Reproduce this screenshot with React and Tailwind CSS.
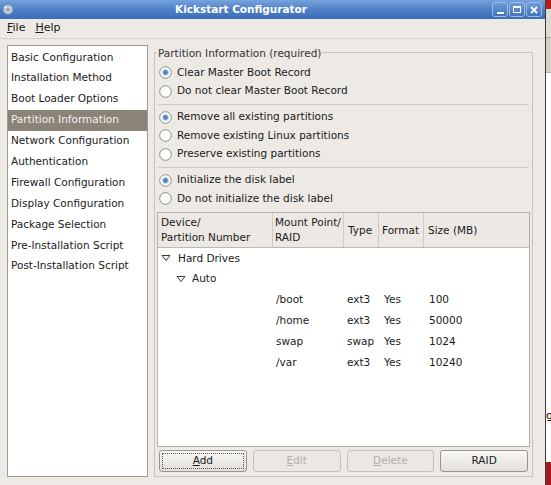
import React from "react";

const F = { fontFamily: '"DejaVu Sans", "Liberation Sans", sans-serif' };

function Radio({ checked }) {
  return (
    <svg width="13" height="13" viewBox="0 0 13 13" className="shrink-0">
      <circle cx="6.5" cy="6.5" r="5.8" fill="#ffffff" stroke="#8f8b85" strokeWidth="1" />
      {checked && (
        <>
          <circle cx="6.5" cy="6.5" r="3.6" fill="#c9dbf2" />
          <circle cx="6.5" cy="6.5" r="2.4" fill="#4f84c9" />
        </>
      )}
    </svg>
  );
}

function RadioRow({ checked, label }) {
  return (
    <div className="h-[18.5px] flex items-center gap-[5px] pl-[1px]">
      <Radio checked={checked} />
      <span>{label}</span>
    </div>
  );
}

function Sep() {
  return (
    <div className="h-[7.5px] flex items-center">
      <div className="w-full h-0 border-t border-[#cfcac3]" />
    </div>
  );
}

function Tri() {
  return (
    <svg width="10" height="8" viewBox="0 0 10 8" className="shrink-0">
      <polygon points="1,1.5 9,1.5 5,6.5" fill="none" stroke="#3c3c3c" strokeWidth="1" />
    </svg>
  );
}

function Btn({ children, disabled, focus }) {
  return (
    <div
      className={
        "h-[22px] rounded-[3px] border flex items-center justify-center p-[2px] " +
        (disabled
          ? "border-[#c4c0ba] bg-[#ebe8e4] text-[#b3afa9]"
          : "border-[#9a968f] bg-gradient-to-b from-[#f8f7f5] to-[#e4e0da] text-[#1a1a1a]")
      }
    >
      <div
        className={
          "w-full h-full flex items-center justify-center " +
          (focus ? "border border-dotted border-[#555]" : "")
        }
      >
        {children}
      </div>
    </div>
  );
}

const sideItems = [
  "Basic Configuration",
  "Installation Method",
  "Boot Loader Options",
  "Partition Information",
  "Network Configuration",
  "Authentication",
  "Firewall Configuration",
  "Display Configuration",
  "Package Selection",
  "Pre-Installation Script",
  "Post-Installation Script",
];

const rows = [
  ["/boot", "ext3", "Yes", "100"],
  ["/home", "ext3", "Yes", "50000"],
  ["swap", "swap", "Yes", "1024"],
  ["/var", "ext3", "Yes", "10240"],
];

const cols = "grid grid-cols-[115px_71px_35px_45px_1fr]";

export default function App() {
  return (
    <div className="w-[551px] h-[485px] flex overflow-hidden text-[10.5px] text-[#1a1a1a]" style={F}>
      {/* Window */}
      <div className="w-[546px] h-full flex flex-col bg-[#ede9e4] border-r border-[#3a3a3a]">
        {/* Title bar */}
        <div className="h-[19px] shrink-0 flex items-center bg-gradient-to-b from-[#76a2dc] via-[#4f80c6] to-[#3b6db6] px-[2px]">
          <svg width="12" height="13" viewBox="0 0 12 13" className="shrink-0">
            <circle cx="6" cy="6.5" r="4.8" fill="#c5cfdc" stroke="#8494aa" strokeWidth="1" />
            <circle cx="6" cy="6.5" r="2" fill="#9aa8bc" />
            <circle cx="3.5" cy="4" r="1" fill="#ffffff" />
          </svg>
          <div className="flex-1 text-center font-bold text-white text-[10.5px] pr-[24px]">
            Kickstart Configurator
          </div>
          <div className="flex gap-[1px] mr-[1px]">
            {["min", "max", "close"].map((k) => (
              <div
                key={k}
                className="w-[16px] h-[15px] rounded-[3px] border border-[#9cbbe6] bg-gradient-to-b from-[#6e9bd8] to-[#4273bb] flex items-center justify-center"
              >
                {k === "min" && <div className="w-[7px] h-[2px] bg-white mt-[6px]" />}
                {k === "max" && <div className="w-[8px] h-[7px] border border-white border-t-2" />}
                {k === "close" && (
                  <svg width="8" height="8" viewBox="0 0 8 8">
                    <path d="M1 1 L7 7 M7 1 L1 7" stroke="#fff" strokeWidth="1.8" />
                  </svg>
                )}
              </div>
            ))}
          </div>
        </div>

        {/* Menu bar */}
        <div className="h-[20px] shrink-0 flex items-center gap-[10px] px-[7px] border-b border-[#d6d1ca] text-[11px]">
          <span>
            <span className="underline">F</span>ile
          </span>
          <span>
            <span className="underline">H</span>elp
          </span>
        </div>

        {/* Body */}
        <div className="flex-1 flex pl-[7px] pt-[6px] gap-[6px]">
          {/* Sidebar */}
          <div className="w-[141px] h-[432px] bg-white border border-[#9e9a93] pt-[1px]">
            {sideItems.map((s) => (
              <div
                key={s}
                className={
                  "h-[20.9px] flex items-center pl-[3px] " +
                  (s === "Partition Information" ? "bg-[#8a8377] text-[#f4f1ec]" : "")
                }
              >
                {s}
              </div>
            ))}
          </div>

          {/* Frame */}
          <div className="relative mt-[7px] w-[379px] h-[425px] border border-[#c9c4bc] flex flex-col px-[3px] pt-[10.5px] pb-[4px]">
            <div className="absolute -top-[7px] left-[2px] bg-[#ede9e4] px-[1px] leading-[14px] text-[#333]">
              Partition Information (required)
            </div>
            <RadioRow checked label="Clear Master Boot Record" />
            <RadioRow label="Do not clear Master Boot Record" />
            <Sep />
            <RadioRow checked label="Remove all existing partitions" />
            <RadioRow label="Remove existing Linux partitions" />
            <RadioRow label="Preserve existing partitions" />
            <Sep />
            <RadioRow checked label="Initialize the disk label" />
            <RadioRow label="Do not initialize the disk label" />

            {/* Table */}
            <div className="mt-[4px] flex-1 flex flex-col border border-[#b5b0a8] -mx-[1px]">
              <div className={cols + " h-[35px] border-b border-[#bdb8b0] bg-[#ece8e3] leading-[15px]"}>
                <div className="flex flex-col justify-center pl-[3px] border-r border-[#cfcac3]">
                  <span>Device/</span>
                  <span>Partition Number</span>
                </div>
                <div className="flex flex-col justify-center pl-[2px] border-r border-[#cfcac3]">
                  <span>Mount Point/</span>
                  <span>RAID</span>
                </div>
                <div className="flex items-center pl-[4px] border-r border-[#cfcac3]">Type</div>
                <div className="flex items-center pl-[3px] border-r border-[#cfcac3]">Format</div>
                <div className="flex items-center pl-[4px]">Size (MB)</div>
              </div>
              <div className="flex-1 bg-white">
                <div className="h-[20.8px] flex items-center pl-[3px] gap-[7px]">
                  <Tri />
                  <span>Hard Drives</span>
                </div>
                <div className="h-[20.8px] flex items-center pl-[18px] gap-[6px]">
                  <Tri />
                  <span>Auto</span>
                </div>
                {rows.map((r) => (
                  <div key={r[0]} className={cols + " h-[20.8px] items-center"}>
                    <div />
                    <div className="pl-[3px]">{r[0]}</div>
                    <div className="pl-[3px]">{r[1]}</div>
                    <div className="pl-[5px]">{r[2]}</div>
                    <div className="pl-[5px]">{r[3]}</div>
                  </div>
                ))}
              </div>
            </div>

            {/* Buttons */}
            <div className="mt-[3px] grid grid-cols-4 gap-[6px] pl-[1px] pr-[1px]">
              <Btn focus>
                <span>
                  <span className="underline">A</span>dd
                </span>
              </Btn>
              <Btn disabled>
                <span>
                  <span className="underline">E</span>dit
                </span>
              </Btn>
              <Btn disabled>
                <span>
                  <span className="underline">D</span>elete
                </span>
              </Btn>
              <Btn>RAID</Btn>
            </div>
          </div>
        </div>
      </div>

      {/* Background strip (other window) */}
      <div className="flex-1 h-full flex flex-col">
        <div className="h-[9px] bg-[#b31d1d]" />
        <div className="h-[29px] bg-[#dedad4] border-b border-[#a9a59f]" />
        <div className="h-[35px] bg-[#d2cec8] border-b border-[#b9b5af]" />
        <div className="flex-1 bg-white relative overflow-hidden">
          <span className="absolute left-0 top-[337px] text-[11px] text-black leading-none">g</span>
        </div>
        <div className="h-[23px] bg-[#a51a1a]" />
      </div>
    </div>
  );
}
